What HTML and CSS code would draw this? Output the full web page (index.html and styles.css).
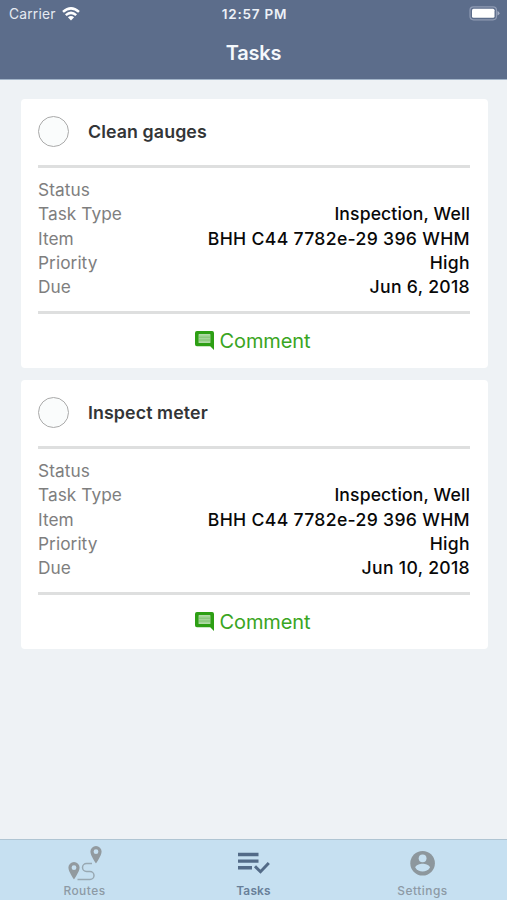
FILE: index.html
```html
<!DOCTYPE html>
<html lang="en">
<head>
<meta charset="utf-8">
<title>Tasks</title>
<link rel="stylesheet" href="styles.css">
</head>
<body>
<div class="app">
  <header class="header">
    <div class="status-bar">
      <div class="carrier"><span>Carrier</span>
        <svg class="wifi" viewBox="0 0 18 14"><g fill="none" stroke="#fff" stroke-width="2.5"><path d="M1 4.9Q9-2.2 17 4.9"/><path d="M3.8 8.1Q9 3.6 14.2 8.1"/></g><path fill="#fff" d="M5.9 10.3Q9 7.9 12.1 10.3L9 13.5Z"/></svg>
      </div>
      <time class="clock">12:57 PM</time>
      <svg class="battery" viewBox="0 0 31 15"><rect x="1" y=".8" width="26.5" height="13" rx="3.5" fill="none" stroke="#8f9bb4" stroke-width="1.2"/><rect x="3" y="2.8" width="22.5" height="9" rx="1.5" fill="#fff"/><path fill="#a5afc5" d="M28.5 5q2 .8 2 2.3t-2 2.3z"/></svg>
    </div>
    <h1 class="title">Tasks</h1>
  </header>
  <main class="list">
    <article class="card">
      <div class="card-head"><span class="check"></span><h2 class="name">Clean gauges</h2></div>
      <dl class="details">
        <div class="row"><dt>Status</dt><dd></dd></div>
        <div class="row"><dt>Task Type</dt><dd class="v-type">Inspection, Well</dd></div>
        <div class="row"><dt>Item</dt><dd>BHH C44 7782e-29 396 WHM</dd></div>
        <div class="row"><dt>Priority</dt><dd>High</dd></div>
        <div class="row"><dt>Due</dt><dd>Jun 6, 2018</dd></div>
      </dl>
      <div class="comment"><svg class="comment-icon" viewBox="0 0 20 20"><path fill="#2d9f14" fill-rule="evenodd" d="M2 0h16q2 0 2 2v18l-4-4H2q-2 0-2-2V2Q0 0 2 0zM4 3.5v9h12v-9z"/><path fill="#a5d59a" d="M4 3.5h12v9H4z"/><path stroke="#6cb85c" stroke-width=".7" d="M4 6.5h12M4 9.5h12"/></svg><span>Comment</span></div>
    </article>
    <article class="card">
      <div class="card-head"><span class="check"></span><h2 class="name">Inspect meter</h2></div>
      <dl class="details">
        <div class="row"><dt>Status</dt><dd></dd></div>
        <div class="row"><dt>Task Type</dt><dd class="v-type">Inspection, Well</dd></div>
        <div class="row"><dt>Item</dt><dd>BHH C44 7782e-29 396 WHM</dd></div>
        <div class="row"><dt>Priority</dt><dd>High</dd></div>
        <div class="row"><dt>Due</dt><dd>Jun 10, 2018</dd></div>
      </dl>
      <div class="comment"><svg class="comment-icon" viewBox="0 0 20 20"><path fill="#2d9f14" fill-rule="evenodd" d="M2 0h16q2 0 2 2v18l-4-4H2q-2 0-2-2V2Q0 0 2 0zM4 3.5v9h12v-9z"/><path fill="#a5d59a" d="M4 3.5h12v9H4z"/><path stroke="#6cb85c" stroke-width=".7" d="M4 6.5h12M4 9.5h12"/></svg><span>Comment</span></div>
    </article>
  </main>
  <nav class="tabs">
    <div class="tab">
      <svg class="tab-icon" viewBox="0 0 36 36"><g fill="#929a9f" fill-rule="evenodd"><path d="M29 1a5.6 5.6 0 0 0-5.6 5.6C23.4 10.8 29 18.5 29 18.5S34.6 10.8 34.6 6.6A5.6 5.6 0 0 0 29 1zm0 3.3a2.4 2.4 0 1 1 0 4.8 2.4 2.4 0 0 1 0-4.8z"/><path d="M7 17a5.6 5.6 0 0 0-5.6 5.6C1.4 26.8 7 34.5 7 34.5S12.6 26.8 12.6 22.6A5.6 5.6 0 0 0 7 17zm0 3.3a2.4 2.4 0 1 1 0 4.8 2.4 2.4 0 0 1 0-4.8z"/></g><path fill="none" stroke="#98a8b2" stroke-width="1.5" d="M25 18.5h-5.500a4 4 0 0 0 0 8h3.500a4 4 0 0 1 0 8H10.500"/></svg>
      <span>Routes</span>
    </div>
    <div class="tab active">
      <svg class="tab-icon" viewBox="0 0 36 36"><path fill="#536b88" d="M2 7.8h20.5v3.4H2zM2 14.4h20.5v3.4H2zM2 21h14v3.4H2z"/><path fill="none" stroke="#536b88" stroke-width="3" d="M19 21.3l5.5 5.4L32.8 18"/></svg>
      <span>Tasks</span>
    </div>
    <div class="tab">
      <svg class="tab-icon" viewBox="0 0 36 36"><circle cx="17.6" cy="18.3" r="12.3" fill="#8d979d"/><circle cx="17.6" cy="13.3" r="3.9" fill="#c6e0f1"/><path fill="#c6e0f1" d="M10.2 22.5c.2-2.5 4.9-3.8 7.4-3.8s7.2 1.3 7.4 3.8A8.8 8.8 0 0 1 10.2 22.5z"/></svg>
      <span>Settings</span>
    </div>
  </nav>
</div>
</body>
</html>
```
FILE: styles.css
```css
* { box-sizing: border-box; }
body { margin: 0; font-family: Inter, "Liberation Sans", sans-serif; }
h1, h2, dl, dd { margin: 0; }
.app { display: flex; flex-direction: column; height: 900px; background: #eef2f5; }
.header { height: 80px; background: #5c6d8b; border-bottom: 1px solid #a3b5c9; color: #fff; }
.status-bar { display: grid; grid-template-columns: 1fr auto 1fr; align-items: center; height: 27px; padding: 0 7px 0 9px; }
.carrier { display: flex; align-items: center; gap: 6px; font-size: 13.8px; color: #e5eaf2; letter-spacing: .2px; }
.wifi { width: 18px; height: 14px; }
.clock { font-size: 13.5px; font-weight: 600; letter-spacing: .8px; color: #edf1f7; }
.battery { width: 31px; height: 15px; justify-self: end; }
.title { font-size: 20px; line-height: 52px; font-weight: 600; letter-spacing: -.25px; text-align: center; color: #f5f8fc; }
.list { flex: 1; display: flex; flex-direction: column; gap: 12px; padding: 19px 19px 0 20.5px; }
.card { height: 269px; padding: 0 18px 0 17.5px; background: #fff; border-radius: 4px; }
.card-head { display: flex; align-items: center; gap: 19px; height: 65.5px; }
.check { width: 31px; height: 31px; border: 1.4px solid #aaa; border-radius: 50%; background: #fafcfc; }
.name { font-size: 17.8px; font-weight: 600; letter-spacing: .1px; color: #333537; }
.details { height: 149px; padding-top: 10.3px; border-top: 3px solid #dedfdf; border-bottom: 3px solid #dedfdf; }
.row { display: flex; justify-content: space-between; height: 24.4px; line-height: 24.4px; font-size: 17.3px; letter-spacing: .05px; color: #7e7e7e; }
.row dd { font-size: 17.6px; font-weight: 500; letter-spacing: .32px; color: #080808; }
.row .v-type { letter-spacing: .12px; }
.comment { display: flex; align-items: center; justify-content: center; gap: 6px; height: 54px; padding-right: 3px; font-size: 20px; letter-spacing: -.1px; color: #39a522; }
.comment-icon { width: 19px; height: 19px; }
.tabs { display: grid; grid-template-columns: repeat(3, 1fr); height: 61px; border-top: 1px solid #afc5d3; background: #c6e0f1; }
.tab { display: flex; flex-direction: column; align-items: center; padding-top: 5px; font-size: 11.9px; line-height: 14px; font-weight: 500; letter-spacing: .5px; color: #8d9aa5; }
.tab-icon { width: 36px; height: 36px; margin-bottom: 3px; }
.active { color: #687f99; font-weight: 600; letter-spacing: .2px; }
```
